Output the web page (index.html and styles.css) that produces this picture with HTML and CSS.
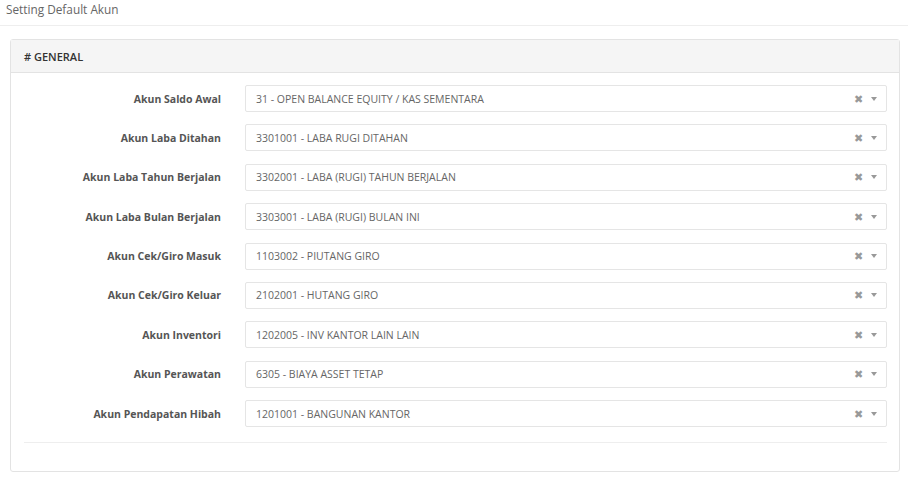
FILE: index.html
```html
<!DOCTYPE html>
<html>
<head>
<meta charset="utf-8">
<link rel="stylesheet" href="styles.css">
</head>
<body>
<div class="page-title">Setting Default Akun</div>
<div class="panel">
  <div class="panel-heading"># GENERAL</div>
  <div class="panel-body">
    <div class="form">
      <label class="lbl">Akun Saldo Awal</label>
      <div class="sel"><span class="val">31 - OPEN BALANCE EQUITY / KAS SEMENTARA</span><span class="clr">&#10006;</span><span class="arr"></span></div>
      <label class="lbl">Akun Laba Ditahan</label>
      <div class="sel"><span class="val">3301001 - LABA RUGI DITAHAN</span><span class="clr">&#10006;</span><span class="arr"></span></div>
      <label class="lbl">Akun Laba Tahun Berjalan</label>
      <div class="sel"><span class="val">3302001 - LABA (RUGI) TAHUN BERJALAN</span><span class="clr">&#10006;</span><span class="arr"></span></div>
      <label class="lbl">Akun Laba Bulan Berjalan</label>
      <div class="sel"><span class="val">3303001 - LABA (RUGI) BULAN INI</span><span class="clr">&#10006;</span><span class="arr"></span></div>
      <label class="lbl">Akun Cek/Giro Masuk</label>
      <div class="sel"><span class="val">1103002 - PIUTANG GIRO</span><span class="clr">&#10006;</span><span class="arr"></span></div>
      <label class="lbl">Akun Cek/Giro Keluar</label>
      <div class="sel"><span class="val">2102001 - HUTANG GIRO</span><span class="clr">&#10006;</span><span class="arr"></span></div>
      <label class="lbl">Akun Inventori</label>
      <div class="sel"><span class="val">1202005 - INV KANTOR LAIN LAIN</span><span class="clr">&#10006;</span><span class="arr"></span></div>
      <label class="lbl">Akun Perawatan</label>
      <div class="sel"><span class="val">6305 - BIAYA ASSET TETAP</span><span class="clr">&#10006;</span><span class="arr"></span></div>
      <label class="lbl">Akun Pendapatan Hibah</label>
      <div class="sel"><span class="val">1201001 - BANGUNAN KANTOR</span><span class="clr">&#10006;</span><span class="arr"></span></div>
    </div>
    <div class="divider"></div>
  </div>
</div>
</body>
</html>
```
FILE: styles.css
```css
html, body {
  margin: 0;
  padding: 0;
  background: #fff;
  font-family: "Open Sans", "Noto Sans", sans-serif;
  color: #555;
}
.page-title {
  height: 26px;
  line-height: 18px;
  padding-left: 6px;
  font-size: 11.8px;
  color: #666;
  border-bottom: 1px solid #eee;
  box-sizing: border-box;
}
.panel {
  margin: 13px 8px 0 10px;
  border: 1px solid #e3e3e3;
  border-radius: 3px;
  background: #fff;
}
.panel-heading {
  height: 32px;
  line-height: 33px;
  background: #f5f5f5;
  border-bottom: 1px solid #e3e3e3;
  padding-left: 13px;
  font-size: 11px;
  font-weight: 600;
  color: #333;
}
.panel-body {
  padding: 12px 12px 28px 13px;
}
.form {
  display: grid;
  grid-template-columns: 197px 1fr;
  column-gap: 24px;
  row-gap: 12.4px;
  align-items: center;
}
.lbl {
  text-align: right;
  font-size: 10.5px;
  font-weight: 700;
  color: #555;
}
.sel {
  height: 27px;
  box-sizing: border-box;
  border: 1px solid #e5e5e5;
  border-radius: 2px;
  display: flex;
  align-items: center;
  padding: 0 9px 0 10px;
  font-size: 10.5px;
  color: #666;
}
.val {
  flex: 1;
}
.clr {
  font-size: 10.5px;
  color: #999;
  margin-right: 8px;
}
.arr {
  width: 0;
  height: 0;
  border-left: 3px solid transparent;
  border-right: 3px solid transparent;
  border-top: 4px solid #999;
}
.divider {
  margin-top: 15px;
  border-top: 1px solid #eee;
}
```
